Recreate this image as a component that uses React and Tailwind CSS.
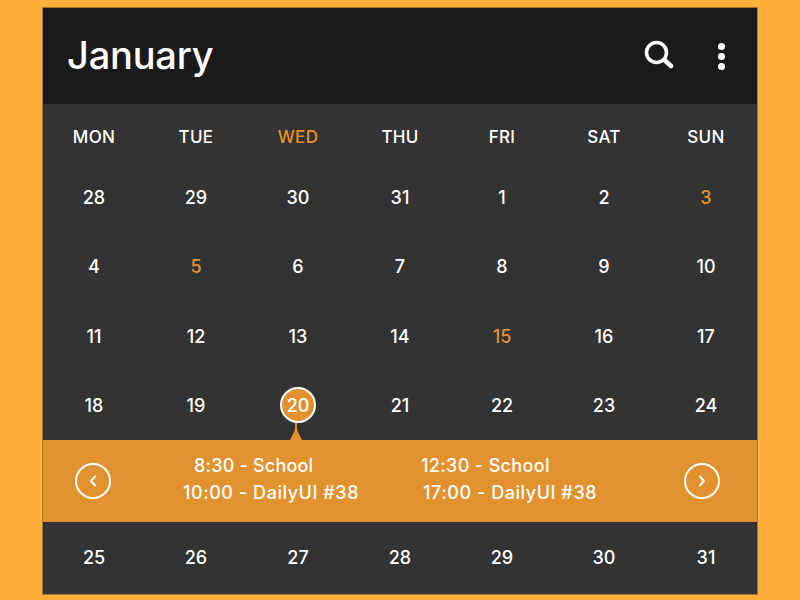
const weeks = [
  [28, 29, 30, 31, 1, 2, 3],
  [4, 5, 6, 7, 8, 9, 10],
  [11, 12, 13, 14, 15, 16, 17],
  [18, 19, 20, 21, 22, 23, 24],
]
const lastWeek = [25, 26, 27, 28, 29, 30, 31]
const days = ["MON", "TUE", "WED", "THU", "FRI", "SAT", "SUN"]

function Row({ values, accent, selected }) {
  return (
    <div className="grid grid-cols-7 h-[69.5px] items-center text-center text-[18px] font-medium text-white">
      {values.map((v, i) => (
        <div key={i} className="relative flex justify-center">
          {v === selected ? (
            <>
              <span className="flex items-center justify-center w-9 h-9 rounded-full border-[2.5px] border-white bg-[#e1922e]">{v}</span>
              <svg className="absolute left-[40px] top-[35px]" width="18" height="18" viewBox="0 0 18 18">
                <path d="M8 1h2v5q0 3 2 6l3 6H3l3-6q2-3 2-6z" fill="#e1922e" />
              </svg>
            </>
          ) : (
            <span className={`pt-[1px] ${v === accent ? "text-[#e1922e]" : ""}`}>{v}</span>
          )}
        </div>
      ))}
    </div>
  )
}

export default function App() {
  return (
    <div className="w-[800px] h-[600px] overflow-hidden bg-[#ffb03b] pt-[7px] px-[42px] font-['Inter',sans-serif]">
      <div className="h-[588px] border border-[#a8772e] bg-[#333333]">
        {/* Header */}
        <div className="h-[96px] bg-[#1a1a1a] flex items-center pl-[24px] pr-[32px] text-white">
          <h1 className="text-[38px] font-medium tracking-[-0.2px] flex-1 -mt-[2px]">January</h1>
          <svg className="mr-[44px] -mt-[2px]" width="30" height="30" viewBox="0 0 30 30" fill="none" stroke="white" strokeLinecap="round">
            <circle cx="12.5" cy="12.5" r="10" strokeWidth="3.5" />
            <path d="M20.5 20l6.5 6" strokeWidth="4.5" />
          </svg>
          <div className="flex flex-col gap-[3px]">
            <span className="w-[7px] h-[7px] rounded-full bg-white" />
            <span className="w-[7px] h-[7px] rounded-full bg-white" />
            <span className="w-[7px] h-[7px] rounded-full bg-white" />
          </div>
        </div>

        {/* Weekdays */}
        <div className="grid grid-cols-7 h-[58px] pt-[10px] items-center text-center text-[17px] font-medium tracking-[0.3px] text-white">
          {days.map((d) => (
            <div key={d} className={d === "WED" ? "text-[#e1922e]" : ""}>{d}</div>
          ))}
        </div>

        {weeks.map((w, i) => (
          <Row key={i} values={w} accent={[3, 5, 15][i]} selected={i === 3 ? 20 : null} />
        ))}

        {/* Events */}
        <div className="h-[82px] bg-[#e1922e] flex items-center pl-[32px] pr-[37px] text-white text-[18px] font-medium leading-[27px]">
          <span className="w-9 h-9 rounded-full border-[2.5px] border-white flex items-center justify-center">
            <svg width="12" height="14" viewBox="0 0 12 14" fill="none" stroke="white" strokeWidth="2" strokeLinecap="round" strokeLinejoin="round"><path d="M8 2.5 4 7l4 4.5" /></svg>
          </span>
          <div className="flex-1 pl-[72px] flex -mt-[4px]">
            <div className="w-[238px]">
              <div className="pl-[11px] tracking-[0.2px]">8:30 - School</div>
              <div className="tracking-[0.55px]">10:00 - DailyUI #38</div>
            </div>
            <div>
              <div className="tracking-[0.35px]">12:30 - School</div>
              <div className="pl-[2px] tracking-[0.55px]">17:00 - DailyUI #38</div>
            </div>
          </div>
          <span className="w-9 h-9 rounded-full border-[2.5px] border-white flex items-center justify-center">
            <svg width="12" height="14" viewBox="0 0 12 14" fill="none" stroke="white" strokeWidth="2" strokeLinecap="round" strokeLinejoin="round"><path d="M4 2.5 8 7l-4 4.5" /></svg>
          </span>
        </div>

        <Row values={lastWeek} />
      </div>
    </div>
  )
}
